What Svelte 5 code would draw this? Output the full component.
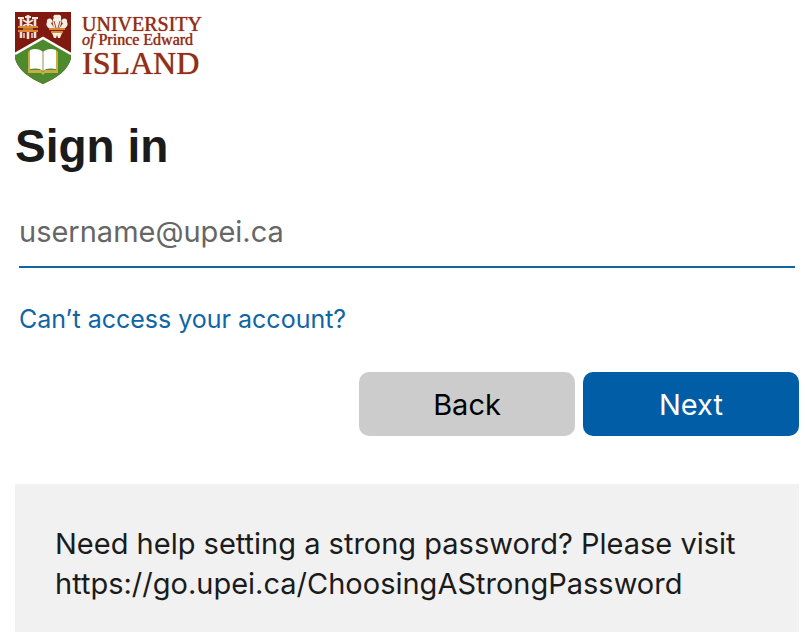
<script>
  const helpUrl = 'https://go.upei.ca/ChoosingAStrongPassword';

  let username = '';
</script>

<main class="page">
  <header class="brand">
    <svg class="shield" viewBox="0 0 57 72" aria-hidden="true">
      <path d="M0 0H56V46C54 57 42 66 28 72C14 66 2 57 0 46Z" fill="#80190f" />
      <path d="M0 42L28 26L56 42V46C54 57 42 66 28 72C14 66 2 57 0 46Z" fill="#4c8a2d" />
      <path d="M0 42L28 26L56 42" fill="none" stroke="#fff" stroke-width="2.4" />

      <!-- bundle of staves -->
      <g fill="none" stroke="#f3e4d8">
        <path d="M6 5V14M6 20V26M13 3V15M13 19V27M20 5V14M20 20V26" stroke-width="2.6" />
        <path d="M3 6H9M10 5H16M17 6H23M8 8L18 14M18 8L8 14" stroke-width="1.8" />
        <path d="M9 21V26M17 21V26" stroke-width="1.4" />
      </g>
      <path d="M3 15H23M3 19H23" stroke="#d98a33" stroke-width="2" />
      <path d="M8 17H18" stroke="#d98a33" stroke-width="1.6" />

      <!-- three feathers -->
      <g fill="#f7eee2">
        <path d="M40 17C37 12 37 8 39 6C37 4 40 2 42 3C45 2 47 4 46 6C47 9 46 13 44 17Z" />
        <path d="M38 18C33 17 30 13 32 10C31 7 35 5 37 8C38 10 37 11 36 11L40 17Z" />
        <path d="M46 18C51 17 54 13 52 10C53 7 49 5 47 8C46 10 47 11 48 11L44 17Z" />
        <path d="M37 21H47L45 26H43L42 23L41 26H39Z" />
      </g>
      <path d="M34 17H50M36 20H48" stroke="#d98a33" stroke-width="2" />
      <path d="M39 9L41 16M45 9L43 16" stroke="#80190f" stroke-width="0.8" />

      <!-- open book -->
      <path d="M13 40L15 38V58H26L28 60L30 58H41V38L43 40V61H30L28 63L26 61H13Z" fill="#c9ad3e" />
      <path d="M15 38C20 36 25 37 28 40C31 37 36 36 41 38V57C36 56 31 56 28 59C25 56 20 56 15 57Z" fill="#fff" />
      <path d="M28 40V59" stroke="#a9a35a" stroke-width="1.2" />
    </svg>
    <div class="wordmark">
      <span class="university">UNIVERSITY</span>
      <span class="province"><em>of</em> Prince Edward</span>
      <span class="island">ISLAND</span>
    </div>
  </header>

  <form on:submit|preventDefault>
    <h1>Sign in</h1>

    <div class="fields">
      <input
        type="email"
        bind:value={username}
        placeholder="username@upei.ca"
        aria-label="username@upei.ca"
      />
      <a class="recover" href="#recover">Can’t access your account?</a>
    </div>

    <div class="actions">
      <button type="button">Back</button>
      <button type="submit" class="primary">Next</button>
    </div>
  </form>

  <p class="help">Need help setting a strong password? Please visit {helpUrl}</p>
</main>

<style>
  :global(body) {
    background: #fff;
  }

  .page {
    padding: 12px 6px 0 15px;
    color: #1b1b1b;
    font-family: Inter, 'Liberation Sans', sans-serif;
  }

  .brand {
    display: flex;
    gap: 10px;
  }

  .shield {
    width: 57px;
    height: 72px;
  }

  .wordmark {
    display: flex;
    flex-direction: column;
    padding-top: 3px;
    color: #922f1a;
    font-family: 'Liberation Serif', serif;
    text-shadow: 0 0 1px currentColor;
    white-space: nowrap;
  }

  .university {
    font-size: 20px;
    line-height: 18px;
  }

  .province {
    font-size: 16px;
    line-height: 14px;
  }

  .island {
    font-size: 32px;
    line-height: 32px;
  }

  h1 {
    margin: 32px 0 24px;
    font-size: 46px;
    line-height: 60px;
    font-weight: 700;
    font-family: 'Liberation Sans', sans-serif;
  }

  .fields {
    display: flex;
    flex-direction: column;
    align-items: flex-start;
    gap: 36px;
    padding: 0 4px;
  }

  input {
    box-sizing: border-box;
    width: 100%;
    height: 68px;
    padding: 0 0 4px;
    border: none;
    border-bottom: 2px solid #0f65a5;
    border-radius: 0;
    outline: none;
    background: none;
    color: #1b1b1b;
    font-family: inherit;
    font-size: 29px;
  }

  input::placeholder {
    color: #666;
    opacity: 1;
  }

  .recover {
    color: #0f65a5;
    font-size: 25px;
    line-height: 30px;
    text-decoration: none;
  }

  .recover:hover {
    text-decoration: underline;
  }

  .actions {
    display: flex;
    justify-content: flex-end;
    gap: 8px;
    margin-top: 38px;
  }

  button {
    width: 216px;
    height: 64px;
    padding: 0;
    border: none;
    border-radius: 10px;
    background: #ccc;
    color: #000;
    font-family: inherit;
    font-size: 29px;
    cursor: pointer;
  }

  .primary {
    background: #005da6;
    color: #fff;
  }

  .help {
    margin: 48px 0 0;
    padding: 40px;
    background: #f1f1f1;
    font-size: 29px;
    line-height: 40px;
  }
</style>
